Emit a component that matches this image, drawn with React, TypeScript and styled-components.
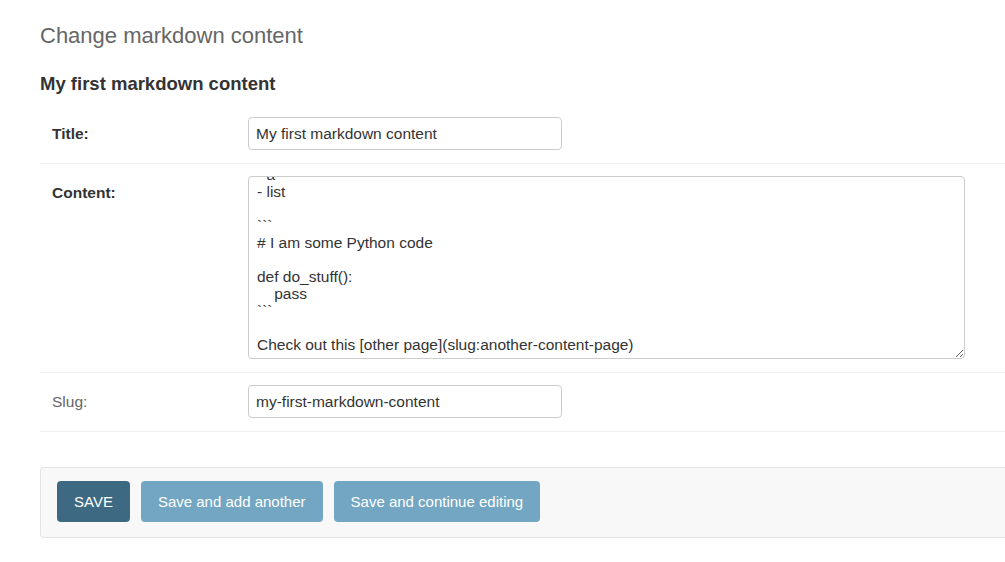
import { useEffect, useRef } from 'react';
import styled, { createGlobalStyle } from 'styled-components';

const GlobalStyle = createGlobalStyle`
  html, body {
    margin: 0;
    padding: 0;
    background: #fff;
    font-family: "Liberation Sans", Arial, sans-serif;
    color: #333;
  }
`;

const Page = styled.div`
  padding: 22px 0 0 40px;
`;

const PageTitle = styled.h1`
  font-size: 22px;
  font-weight: 300;
  color: #666;
  margin: 0 0 22px;
  line-height: 28px;
`;

const Fieldset = styled.div`
  margin-bottom: 35px;
`;

const FieldsetTitle = styled.h2`
  font-size: 18.5px;
  font-weight: 700;
  color: #333;
  margin: 0 0 9px;
  line-height: 24px;
`;

const Row = styled.div`
  display: flex;
  align-items: flex-start;
  padding: 12px 12px 13px;
  border-bottom: 1px solid #eee;
`;

const Label = styled.label<{ $required?: boolean }>`
  width: 196px;
  flex: none;
  font-size: 15.5px;
  line-height: 18px;
  padding-top: 8px;
  font-weight: ${p => (p.$required ? 700 : 400)};
  color: ${p => (p.$required ? '#333' : '#666')};
`;

const Input = styled.input`
  box-sizing: border-box;
  width: 314px;
  height: 33px;
  padding: 5px 7px;
  border: 1px solid #ccc;
  border-radius: 4px;
  font-family: inherit;
  font-size: 15.5px;
  color: #333;
`;

const TextArea = styled.textarea`
  box-sizing: border-box;
  width: 717px;
  height: 183px;
  padding: 5px 8px;
  border: 1px solid #ccc;
  border-radius: 4px;
  font-family: inherit;
  font-size: 15.5px;
  line-height: 17px;
  color: #333;
  overflow: hidden;
  resize: vertical;
`;

const SubmitRow = styled.div`
  display: flex;
  gap: 11px;
  padding: 13px 16px 15px;
  background: #f8f8f8;
  border: 1px solid #e5e5e5;
  border-right: none;
  border-radius: 4px 0 0 4px;
`;

const Button = styled.button<{ $primary?: boolean }>`
  height: 41px;
  padding: 0 17px;
  border: none;
  border-radius: 4px;
  font-family: inherit;
  font-size: 15px;
  color: #fff;
  background: ${p => (p.$primary ? '#3d6983' : '#72a6c2')};
  text-transform: ${p => (p.$primary ? 'uppercase' : 'none')};
  cursor: pointer;
`;

const content = `# Some heading

Some text here.

- a
- list

\`\`\`
# I am some Python code

def do_stuff():
    pass
\`\`\`

Check out this [other page](slug:another-content-page)`;

export default function App() {
  const ref = useRef<HTMLTextAreaElement>(null);
  useEffect(() => {
    if (ref.current) ref.current.scrollTop = ref.current.scrollHeight;
  }, []);

  return (
    <Page>
      <GlobalStyle />
      <PageTitle>Change markdown content</PageTitle>
      <Fieldset>
        <FieldsetTitle>My first markdown content</FieldsetTitle>
        <Row>
          <Label $required>Title:</Label>
          <Input defaultValue="My first markdown content" />
        </Row>
        <Row>
          <Label $required>Content:</Label>
          <TextArea ref={ref} defaultValue={content} />
        </Row>
        <Row>
          <Label>Slug:</Label>
          <Input defaultValue="my-first-markdown-content" />
        </Row>
      </Fieldset>
      <SubmitRow>
        <Button $primary>Save</Button>
        <Button>Save and add another</Button>
        <Button>Save and continue editing</Button>
      </SubmitRow>
    </Page>
  );
}
